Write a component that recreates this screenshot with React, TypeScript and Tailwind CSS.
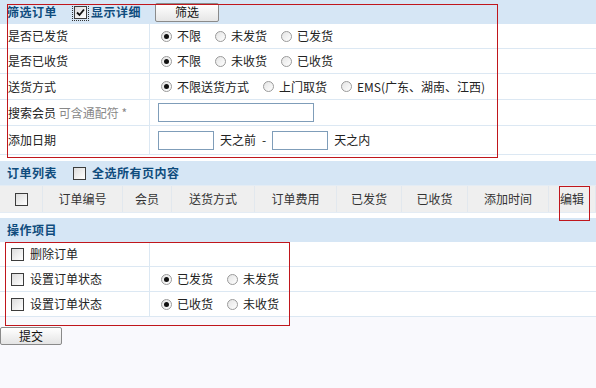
import type { ReactNode } from "react";

const font = "font-['SimSun','Noto_Sans_CJK_SC',sans-serif]";

function Radio({ checked, label }: { checked?: boolean; label: string }) {
  return (
    <span className="flex items-center gap-[5px]">
      <span className="flex h-[11px] w-[11px] items-center justify-center rounded-full border border-[#9a9a9a] bg-gradient-to-br from-[#e4e4e4] to-white">
        {checked && <span className="h-[5px] w-[5px] rounded-full bg-[#111]" />}
      </span>
      <span>{label}</span>
    </span>
  );
}

function Box({ checked, focus }: { checked?: boolean; focus?: boolean }) {
  return (
    <span className={focus ? "flex p-[1px] outline outline-1 outline-dotted outline-[#333]" : "flex"}>
      <span className="flex h-[13px] w-[13px] items-center justify-center border border-[#3c3c3c] bg-gradient-to-br from-[#dcdcdc] to-white">
        {checked && (
          <svg width="9" height="9" viewBox="0 0 9 9">
            <path d="M1 4.5 L3.5 7 L8 1.5" stroke="#111" strokeWidth="1.8" fill="none" />
          </svg>
        )}
      </span>
    </span>
  );
}

function Head({ children }: { children: ReactNode }) {
  return (
    <div className="flex h-[24px] items-center gap-[16px] bg-[#d6e6f5] pl-[7px] text-[12px] font-bold tracking-[0.5px] text-[#0f4c7d]">
      {children}
    </div>
  );
}

function Row({ label, h, children }: { label: ReactNode; h: string; children?: ReactNode }) {
  return (
    <div className={`grid grid-cols-[150px_1fr] border-b border-[#dce8f3] bg-white ${h}`}>
      <div className="flex items-center border-r border-[#dce8f3] pl-[8px]">{label}</div>
      <div className="flex items-center gap-[14px] pl-[11px]">{children}</div>
    </div>
  );
}

function Input({ w }: { w: string }) {
  return <span className={`block h-[19px] border border-[#7f9db9] bg-white ${w}`} />;
}

const cols = [
  { t: "", w: "w-[43px]" },
  { t: "订单编号", w: "w-[80px]" },
  { t: "会员", w: "w-[49px]" },
  { t: "送货方式", w: "w-[83px]" },
  { t: "订单费用", w: "w-[82px]" },
  { t: "已发货", w: "w-[65px]" },
  { t: "已收货", w: "w-[66px]" },
  { t: "添加时间", w: "w-[81px]" },
  { t: "编辑", w: "flex-1" },
];

export default function App() {
  return (
    <div className={`relative h-[388px] w-[596px] overflow-hidden bg-[#f9f9fd] text-[12px] text-[#222] ${font}`}>
      <Head>
        <span>筛选订单</span>
        <span className="flex items-center gap-[3px]">
          <Box checked focus />
          <span>显示详细</span>
        </span>
        <span className="-ml-[2px] flex h-[19px] w-[64px] items-center justify-center rounded-[2px] border border-[#8a8a8a] bg-gradient-to-b from-white to-[#e6e6e6] font-normal tracking-normal text-[#111]">
          筛选
        </span>
      </Head>
      <Row label="是否已发货" h="h-[25px]">
        <Radio checked label="不限" />
        <Radio label="未发货" />
        <Radio label="已发货" />
      </Row>
      <Row label="是否已收货" h="h-[25px]">
        <Radio checked label="不限" />
        <Radio label="未收货" />
        <Radio label="已收货" />
      </Row>
      <Row label="送货方式" h="h-[26px]">
        <Radio checked label="不限送货方式" />
        <Radio label="上门取货" />
        <Radio label="EMS(广东、湖南、江西)" />
      </Row>
      <Row
        label={
          <span>
            搜索会员 <span className="text-[#888]">可含通配符 *</span>
          </span>
        }
        h="h-[26px]"
      >
        <span className="-ml-[3px]">
          <Input w="w-[156px]" />
        </span>
      </Row>
      <Row label="添加日期" h="h-[29px]">
        <span className="-ml-[3px] flex items-center gap-[6px]">
          <Input w="w-[56px]" />
          <span>天之前</span>
          <span>-</span>
          <Input w="w-[56px]" />
          <span>天之内</span>
        </span>
      </Row>
      <div className="h-[6px] bg-white" />

      <Head>
        <span>订单列表</span>
        <span className="flex items-center gap-[6px]">
          <Box />
          <span>全选所有页内容</span>
        </span>
      </Head>
      <div className="flex h-[28px] border-y border-[#e4ecf4] bg-[#efefef] text-[#333]">
        {cols.map((c, i) => (
          <div key={i} className={`flex items-center justify-center border-r border-[#e2e8ee] ${c.w}`}>
            {i === 0 ? <Box /> : c.t}
          </div>
        ))}
      </div>
      <div className="h-[5px] bg-white" />

      <Head>
        <span>操作项目</span>
      </Head>
      <Row
        label={
          <span className="flex items-center gap-[6px] pl-[3px]">
            <Box />
            删除订单
          </span>
        }
        h="h-[25px]"
      />
      <Row
        label={
          <span className="flex items-center gap-[6px] pl-[3px]">
            <Box />
            设置订单状态
          </span>
        }
        h="h-[25px]"
      >
        <Radio checked label="已发货" />
        <Radio label="未发货" />
      </Row>
      <Row
        label={
          <span className="flex items-center gap-[6px] pl-[3px]">
            <Box />
            设置订单状态
          </span>
        }
        h="h-[25px]"
      >
        <Radio checked label="已收货" />
        <Radio label="未收货" />
      </Row>

      <div className="mt-[10px] flex h-[18px] w-[62px] items-center justify-center rounded-[2px] border border-[#8a8a8a] bg-gradient-to-b from-white to-[#e4e4e4] text-[#111]">
        提交
      </div>

      {/* red annotation boxes */}
      <div className="pointer-events-none absolute left-[7px] top-[4px] h-[154px] w-[491px] border border-[#c0161c]" />
      <div className="pointer-events-none absolute left-[559px] top-[186px] h-[35px] w-[31px] border border-[#c0161c]" />
      <div className="pointer-events-none absolute left-[5px] top-[242px] h-[84px] w-[285px] border border-[#c0161c]" />
    </div>
  );
}
